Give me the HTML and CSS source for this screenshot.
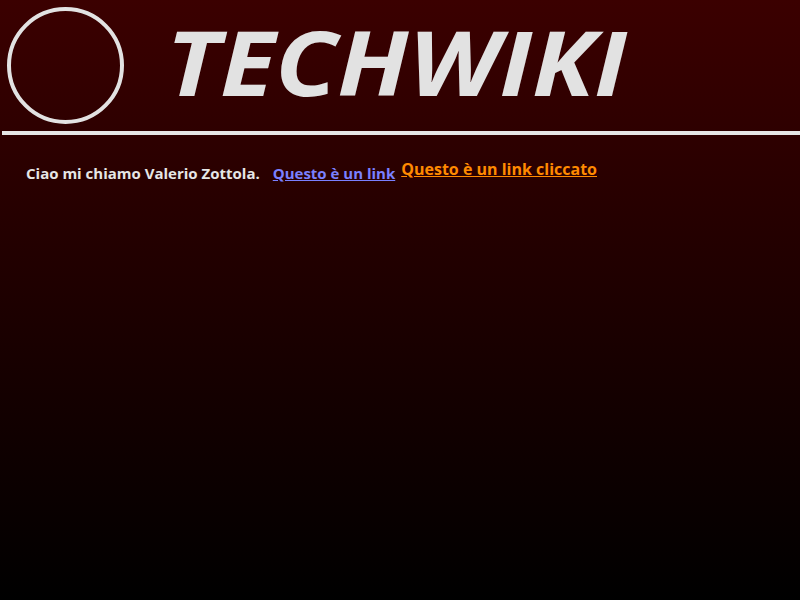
FILE: index.html
```html
<!DOCTYPE html>
<html lang="it">
<head>
<meta charset="utf-8">
<title>TechWiki</title>
<link rel="stylesheet" href="styles.css">
</head>
<body>
<header class="header">
  <div class="logo"></div>
  <h1 class="title">TECHWIKI</h1>
</header>
<hr class="rule">
<p class="intro">
  <span class="name">Ciao mi chiamo Valerio Zottola.</span>
  <a class="link" href="#">Questo è un link</a>
  <a class="link visited" href="#">Questo è un link cliccato</a>
</p>
</body>
</html>
```
FILE: styles.css
```css
html, body {
  margin: 0;
  padding: 0;
  height: 100%;
}
body {
  background: linear-gradient(to bottom, #3b0000 0%, #000000 100%);
  font-family: "Open Sans", "Noto Sans", sans-serif;
  color: #e6e6e6;
}
.header {
  display: flex;
  align-items: center;
  padding: 6px 0 0 7px;
  height: 125px;
  box-sizing: border-box;
}
.logo {
  width: 117px;
  height: 117px;
  box-sizing: border-box;
  border: 4px solid #e2e2e2;
  border-radius: 50%;
  flex: none;
}
.title {
  margin: 0 0 10px 42px;
  font-size: 90px;
  font-weight: 700;
  font-style: italic;
  color: #e2e2e2;
  line-height: 1;
  letter-spacing: 0;
  transform: scaleX(1.13);
  transform-origin: left center;
}
.rule {
  margin: 6px 0 0 2px;
  border: 0;
  height: 4px;
  background: #e6e6e6;
}
.intro {
  margin: 27px 0 0 26px;
  display: flex;
  align-items: baseline;
  font-size: 15px;
  font-weight: 700;
}
.name {
  margin-right: 13px;
}
.link {
  color: #7a80ff;
  margin-right: 6px;
}
.visited {
  color: #ff8a00;
  font-size: 16px;
  position: relative;
  top: -4px;
}
```
